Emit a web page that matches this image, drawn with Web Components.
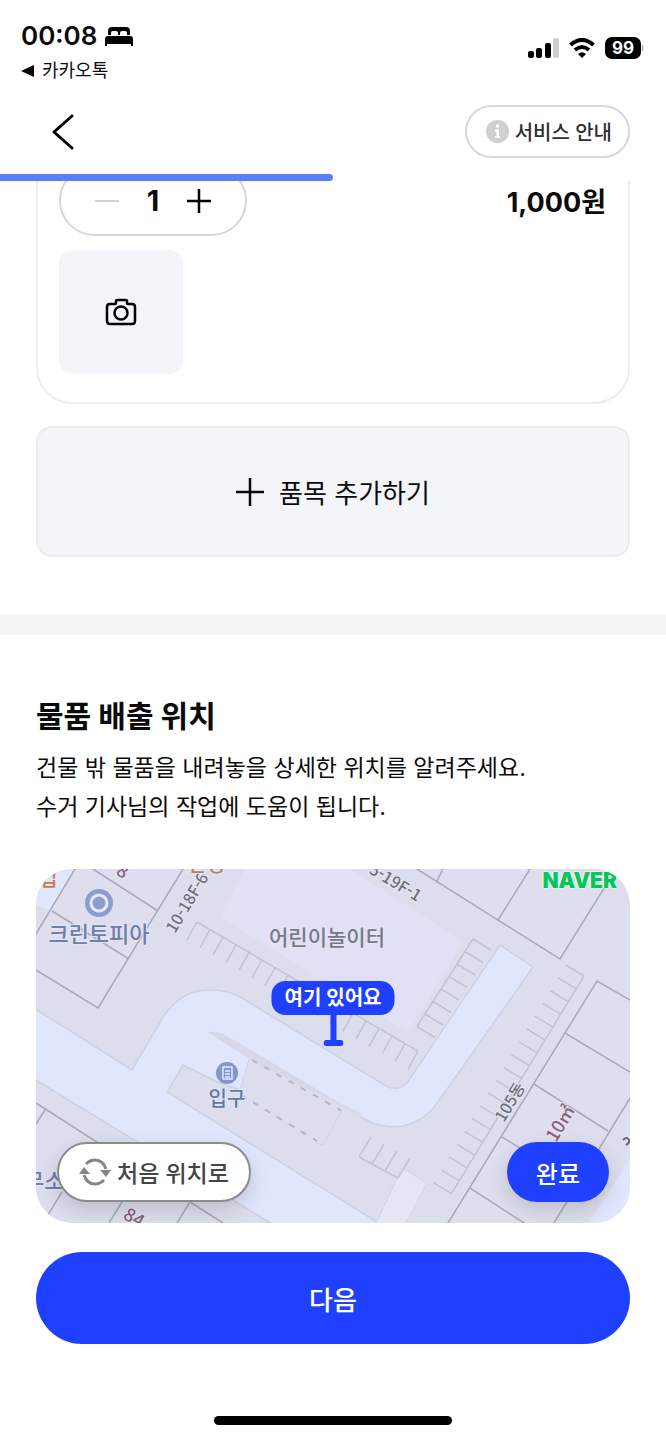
<!DOCTYPE html>
<html lang="ko">
<head>
<meta charset="utf-8">
<meta name="viewport" content="width=device-width, initial-scale=1">
<title>물품 배출 위치</title>
<style>
    html {
        --blue: #1f40ff;
        --gray: #f4f5f8;
        --side: 36px;
    }

    body {
        margin: 0;
        background: white;
        color: #0b0b0c;
        font-family: Inter, "Noto Sans CJK KR", sans-serif;
    }
</style>
</head>
<body>
<pickup-app></pickup-app>

<script>
const define = (name, html, setup) => {
    const template = document.createElement('template');
    template.innerHTML = html;

    customElements.define(name, class extends HTMLElement {
        constructor() {
            super();
            this._shadowRoot = this.attachShadow({ mode: 'open' });
            this._shadowRoot.appendChild(template.content.cloneNode(true));
            if (setup) setup(this, this._shadowRoot);
        }
    });
};

// Phone status bar
define('status-bar', `
    <style>
        :host {
            display: flex;
            justify-content: space-between;
            align-items: flex-start;
            padding: 20px 21px 21px;
        }

        .time {
            display: flex;
            align-items: center;
            gap: 8px;
            font-size: 26px;
            line-height: 32px;
            font-weight: 600;
        }

        .from {
            display: flex;
            align-items: center;
            gap: 8px;
            margin-top: 6px;
            color: inherit;
            font-size: 18px;
            line-height: 26px;
            text-decoration: none;
        }

        .signals {
            display: flex;
            align-items: center;
            gap: 10px;
            margin-top: 17px;
        }

        .battery {
            display: flex;
            align-items: center;
            gap: 1px;
        }

        .level {
            width: 36px;
            border-radius: 7px;
            background: black;
            color: white;
            font-size: 17px;
            line-height: 22px;
            font-weight: 700;
            text-align: center;
        }

        svg { display: block; }
    </style>

    <div>
        <div class="time">
            <span>00:08</span>
            <svg width="28" height="19" viewBox="0 0 28 19">
                <path d="M3 8V4q0-4 4-4h14q4 0 4 4v4h-3V6q0-2-2-2h-3q-2 0-2 2v2h-2V6q0-2-2-2H8Q6 4 6 6v2zM0 19v-7q0-3 3-3h22q3 0 3 3v7h-2v-2H2v2z"/>
            </svg>
        </div>
        <a class="from" href="#">
            <svg width="13" height="12" viewBox="0 0 13 12"><path d="M0 6 13 0v12z"/></svg>
            <span>카카오톡</span>
        </a>
    </div>
    <div class="signals">
        <svg width="31" height="20" viewBox="0 0 31 20">
            <rect y="13" width="6" height="7" rx="2"/>
            <rect x="8" y="10" width="6" height="10" rx="2"/>
            <rect x="17" y="5" width="6" height="15" rx="2"/>
            <rect x="25" width="6" height="20" rx="2" fill="#cfcfcf"/>
        </svg>
        <svg width="26" height="20" viewBox="0 0 26 20" fill="none" stroke="black">
            <path d="M1.500 7Q13-3 24.500 7" stroke-width="4"/>
            <path d="M6 12q7-6 14 0" stroke-width="4"/>
            <path d="M9 16q4-3.500 8 0l-4 4z" fill="black" stroke="none"/>
        </svg>
        <div class="battery">
            <div class="level">99</div>
            <svg width="3" height="8" viewBox="0 0 3 8"><path d="M0 0q3 4 0 8z" fill="#aaa"/></svg>
        </div>
    </div>
`);

define('app-header', `
    <style>
        :host { display: block; }

        .row {
            display: flex;
            justify-content: space-between;
            align-items: center;
            padding: 0 var(--side) 16px 42px;
        }

        button {
            border: 0;
            background: none;
            font: inherit;
            cursor: pointer;
        }

        .back {
            display: grid;
            place-items: center;
            width: 42px;
            height: 48px;
            padding: 0;
        }

        .info {
            display: flex;
            align-items: center;
            gap: 6px;
            height: 53px;
            padding: 0 16px 0 19px;
            border: 2px solid #d8d8da;
            border-radius: 27px;
            color: #2e2e30;
            font-size: 20px;
            font-weight: 500;
        }

        progress {
            display: block;
            width: 100%;
            height: 7px;
            border: 0;
            appearance: none;
            background: none;
        }

        progress::-webkit-progress-bar { background: none; }

        progress::-webkit-progress-value {
            border-radius: 0 4px 4px 0;
            background: #587efb;
        }

        svg { display: block; }
    </style>

    <div class="row">
        <button class="back" aria-label="뒤로">
            <svg width="24" height="38" viewBox="0 0 24 38" fill="none" stroke="black" stroke-width="3" stroke-linecap="round" stroke-linejoin="round">
                <path d="M21 3 3 19l18 16"/>
            </svg>
        </button>
        <button class="info">
            <svg width="23" height="23" viewBox="0 0 23 23">
                <circle cx="11.500" cy="11.500" r="11.500" fill="#d0d0d2"/>
                <circle cx="11.500" cy="6" r="1.800" fill="white"/>
                <path d="M9 9.500h4V16h1v2H9v-2h1.500v-4.500H9z" fill="white"/>
            </svg>
            <slot></slot>
        </button>
    </div>
    <progress value="50" max="100" aria-label="진행률"></progress>
`);

define('quantity-stepper', `
    <style>
        :host {
            display: flex;
            justify-content: center;
            align-items: center;
            gap: 20px;
            box-sizing: border-box;
            width: 188px;
            height: 71px;
            border: 2px solid #d6d6d8;
            border-radius: 36px;
        }

        button {
            display: grid;
            place-items: center;
            width: 32px;
            height: 44px;
            padding: 0;
            border: 0;
            background: none;
            color: black;
            cursor: pointer;
        }

        button:disabled { color: #d2d2d5; }

        output {
            width: 20px;
            font-size: 29px;
            font-weight: 700;
            text-align: center;
        }
    </style>

    <button class="minus" aria-label="수량 빼기">
        <svg width="24" height="24" stroke="currentColor" stroke-width="2"><path d="M0 12h24"/></svg>
    </button>
    <output>1</output>
    <button class="plus" aria-label="수량 더하기">
        <svg width="24" height="24" stroke="currentColor" stroke-width="2.500"><path d="M0 12h24M12 0v24"/></svg>
    </button>
`, (host, root) => {
    const $output = root.querySelector('output');
    const $minus = root.querySelector('.minus');

    const change = step => {
        const value = Math.max(1, Number($output.value) + step);
        $output.value = value;
        $minus.disabled = value === 1;
    };

    $minus.addEventListener('click', () => change(-1));
    root.querySelector('.plus').addEventListener('click', () => change(1));
    change(0);
});

define('item-card', `
    <style>
        :host {
            display: block;
            padding: 22px 22px 28px 21px;
            border: 2px solid #ededef;
            border-radius: 36px;
        }

        .row {
            display: flex;
            justify-content: space-between;
            align-items: center;
        }

        strong {
            font-size: 27px;
            font-weight: 700;
        }

        .photo {
            display: grid;
            place-items: center;
            width: 124px;
            height: 124px;
            margin-top: 14px;
            border: 0;
            border-radius: 14px;
            background: var(--gray);
            cursor: pointer;
        }
    </style>

    <div class="row">
        <quantity-stepper></quantity-stepper>
        <strong><slot></slot></strong>
    </div>
    <button class="photo" aria-label="사진 추가">
        <svg width="32" height="28" viewBox="0 0 32 28" fill="none" stroke="black" stroke-width="2.500" stroke-linejoin="round">
            <path d="M5 6h5q1 0 1-1V3q0-1 2-1h7q2 0 2 1v2q0 1 1 1h4q3 0 3 3v14q0 3-3 3H5q-3 0-3-3V9q0-3 3-3z"/>
            <circle cx="16" cy="15" r="6.500"/>
        </svg>
    </button>
`);

define('add-button', `
    <style>
        :host { display: block; }

        button {
            display: flex;
            justify-content: center;
            align-items: center;
            gap: 15px;
            width: 100%;
            height: 131px;
            padding: 0;
            border: 2px solid #ebecee;
            border-radius: 16px;
            background: var(--gray);
            color: inherit;
            font: inherit;
            font-size: 26px;
            cursor: pointer;
        }
    </style>

    <button>
        <svg width="28" height="28" stroke="currentColor" stroke-width="2.500"><path d="M0 14h28M14 0v28"/></svg>
        <slot></slot>
    </button>
`);

define('pill-button', `
    <style>
        :host { display: block; }

        button {
            display: flex;
            justify-content: center;
            align-items: center;
            gap: 6px;
            width: 100%;
            height: 60px;
            padding: 0 29px;
            border: 0;
            border-radius: 46px;
            background: var(--blue);
            color: white;
            font: inherit;
            font-size: 24px;
            font-weight: 500;
            cursor: pointer;
        }

        :host([large]) button {
            height: 92px;
            font-size: 26px;
        }

        :host([outline]) button {
            padding: 0 20px;
            border: 2px solid #8c8c8e;
            background: white;
            color: #444446;
            font-size: 23px;
        }

        :host([floating]) button { box-shadow: 0 8px 20px #00000026; }
    </style>

    <button><slot name="icon"></slot><slot></slot></button>
`);

define('map-marker', `
    <style>
        :host {
            display: flex;
            flex-direction: column;
            align-items: center;
        }

        span {
            padding: 0 13px;
            border-radius: 14px;
            background: var(--blue);
            color: white;
            font-size: 20px;
            line-height: 34px;
            font-weight: 600;
            white-space: nowrap;
        }

        svg { display: block; }
    </style>

    <span><slot></slot></span>
    <svg width="20" height="31" viewBox="0 0 20 31" fill="none" stroke="#1f40ff" stroke-linecap="round">
        <path d="M10 0v28" stroke-width="6" stroke-linecap="butt"/>
        <path d="M3 28h14" stroke-width="6"/>
    </svg>
`);

define('location-map', `
    <style>
        :host {
            display: block;
            position: relative;
            aspect-ratio: 594 / 354;
            overflow: hidden;
            border-radius: 36px;
            background: #dddeed;
        }

        .map {
            display: block;
            width: 100%;
            height: 100%;
        }

        .road { fill: #e0e6fb; stroke: #ccd2e4; stroke-width: 1.500; }
        .lines { fill: none; stroke: #aaaab7; stroke-width: 1.500; }
        .parking { fill: none; stroke: #c2c2d1; stroke-width: 1.500; }
        .dashes { fill: none; stroke: #b5b6c5; stroke-width: 2; stroke-dasharray: 6 8; }

        text {
            font-family: "Noto Sans CJK KR", sans-serif;
            font-weight: 500;
            paint-order: stroke;
            stroke: #e4e5f3;
            stroke-width: 2px;
            stroke-linejoin: round;
        }

        .shop { fill: #6c7eaa; font-size: 22px; }
        .place { fill: #777989; font-size: 21px; }
        .gate { fill: #5d7ca4; font-size: 20px; }
        .block { fill: #6f6f79; font-size: 16px; }
        .area { fill: #8a6080; font-size: 18px; }
        .food { fill: #c07c5a; font-size: 20px; }

        .brand {
            position: absolute;
            top: 0;
            right: 13px;
            color: #03c75a;
            font-size: 21px;
            line-height: 23px;
            font-weight: 900;
            text-decoration: none;
            text-shadow: 0 0 2px white, 0 0 2px white;
        }

        map-marker {
            position: absolute;
            top: 50%;
            left: 50%;
            transform: translate(-50%, -100%);
        }

        .actions {
            position: absolute;
            inset: auto 21px 21px;
            display: flex;
            justify-content: space-between;
        }
    </style>

    <svg class="map" viewBox="0 0 594 354" preserveAspectRatio="xMidYMid slice">
        <path fill="#dfdeee" d="M37 0h110L62 139 0 101V64zM381 0l143 90 56-90zM594 131l-33-19-149 242h106l76-123z"/>
        <path fill="#e0e6fb" d="M0 0h38L16 42 0 36zM594 290v64h-42z"/>
        <path fill="#e2e0f5" d="M209 0l-25 48 188 115 55-90L314 0z"/>
        <path class="road" d="M-2 139 96 201 127 148Q146 121 171 121 190 120 206 129L350 217Q362 223 371 214L464 76l33 22L397 240Q370 267 334 253L214 189 204 221 181 213 147 196 131 223 346 356H238L-2 210z"/>
        <path fill="#dddeed" d="M214 189l-10 32 95 52 28-28z"/>
        <path fill="#d6d7e7" d="M171 163q12-2 25 7l138 82-120-62z"/>
        <path fill="#e6e5f3" stroke="#d2d2e0" d="M366 299l25 15-22 42h-30z"/>
        <path class="lines" d="M39 0 0 65M57 0l65 42M147 0 62 139 0 101M16 42l77 48M381 0l143 90 56-90M494 0l-32 51M407 0l-6 12M594 131l-33-19-149 242M529 164l65 39M498 215l74 47M594 229l-76 125M466 268l84 52M434 319l54 35M0 234l154 99 33 21M9 241l-9 14M26 323l-16 26M86 333l-13 21M154 333l-13 21"/>
        <path class="parking"/>
        <path class="dashes" d="M216 191l90 51M205 226l76 46"/>
        <path fill="none" stroke="#d0d1e1" d="M306 241l-19 35-8-3"/>

        <circle cx="63" cy="34" r="14" fill="#8b9dd0"/>
        <circle cx="63" cy="34" r="8" fill="#8b9dd0" stroke="#e4e9fa" stroke-width="3"/>
        <circle cx="191" cy="204" r="11" fill="#8397ce"/>
        <path fill="none" stroke="#e4e9fa" stroke-width="1.500" d="M187 198h9v12h-9zM189 202h5M189 205h5M189 208h5"/>

        <text class="shop" x="63" y="73" text-anchor="middle">크린토피아</text>
        <text class="shop" x="-12" y="320">무소</text>
        <text class="place" x="291" y="76" text-anchor="middle">어린이놀이터</text>
        <text class="gate" x="191" y="237" text-anchor="middle">입구</text>
        <text class="block" transform="translate(139 65) rotate(-59)">10-18F-6</text>
        <text class="block" text-anchor="end" transform="translate(381 33) rotate(31)">5-19F-1</text>
        <text class="block" transform="translate(468 254) rotate(-59)">105동</text>
        <text class="area" transform="translate(520 274) rotate(-59)">10㎡</text>
        <text class="area" transform="translate(79 5) rotate(31)">8</text>
        <text class="area" transform="translate(86 349) rotate(31)">84</text>
        <text class="food" x="3" y="17">업</text>
        <text class="food" x="152" y="3">안경</text>
        <path fill="none" stroke="#6b6b76" stroke-width="2" d="M587 271q4-4 6 0 1 3-3 5"/>
    </svg>
    <a class="brand" href="#">NAVER</a>
    <map-marker><slot></slot></map-marker>
    <div class="actions">
        <pill-button outline floating>
            <svg slot="icon" width="32" height="28" viewBox="0 0 32 28" fill="none" stroke="#858587" stroke-width="3">
                <path d="M7 6q4-4 9-4 8 0 11 9M25 22q-4 4-9 4-8 0-11-9"/>
                <path d="M0 16l5-7 6 7zM21 12h11l-5 7z" fill="#858587" stroke="none"/>
            </svg>
            처음 위치로
        </pill-button>
        <pill-button floating>완료</pill-button>
    </div>
`, (host, root) => {
    // A row of parking bays: kerb line plus one divider per bay
    const bays = (x, y, dx, dy, count, tx, ty) => {
        let d = `M${x} ${y}l${dx * (count - 1)} ${dy * (count - 1)}`;
        for (let i = 0; i < count; i++) {
            d += `M${x + dx * i} ${y + dy * i}l${tx} ${ty}`;
        }
        return d;
    };

    root.querySelector('.parking').setAttribute('d',
        bays(161, 53, 13, 7.6, 18, -10, 18) +
        bays(437, 70, -8, 12.5, 8, 18, 11) +
        bays(548, 107, -7.8, 12.8, 18, -18, -11) +
        bays(323, 288, 13, 7, 4, 12, -20)
    );
});

define('pickup-app', `
    <style>
        :host { display: block; }

        main { overflow: hidden; }

        .items {
            display: flex;
            flex-direction: column;
            gap: 22px;
            /* scrolled a little way under the header */
            margin-top: -40px;
            padding: 0 var(--side) 57px;
        }

        .location {
            padding: 60px var(--side) 0;
            border-top: 21px solid #f4f5f7;
        }

        h2 {
            margin: 0 0 12px;
            font-size: 30px;
            line-height: 42px;
            font-weight: 700;
        }

        p {
            margin: 0 0 42px;
            font-size: 23px;
            line-height: 39px;
        }

        footer {
            padding: 29px var(--side) 15px;
        }

        .home {
            width: 40%;
            height: 9px;
            margin: 72px auto 0;
            border-radius: 5px;
            background: black;
        }
    </style>

    <status-bar></status-bar>
    <app-header>서비스 안내</app-header>
    <main>
        <section class="items">
            <item-card>1,000원</item-card>
            <add-button>품목 추가하기</add-button>
        </section>
        <section class="location">
            <h2>물품 배출 위치</h2>
            <p>건물 밖 물품을 내려놓을 상세한 위치를 알려주세요.<br>수거 기사님의 작업에 도움이 됩니다.</p>
            <location-map>여기 있어요</location-map>
        </section>
    </main>
    <footer>
        <pill-button large>다음</pill-button>
        <div class="home"></div>
    </footer>
`);
</script>
</body>
</html>
